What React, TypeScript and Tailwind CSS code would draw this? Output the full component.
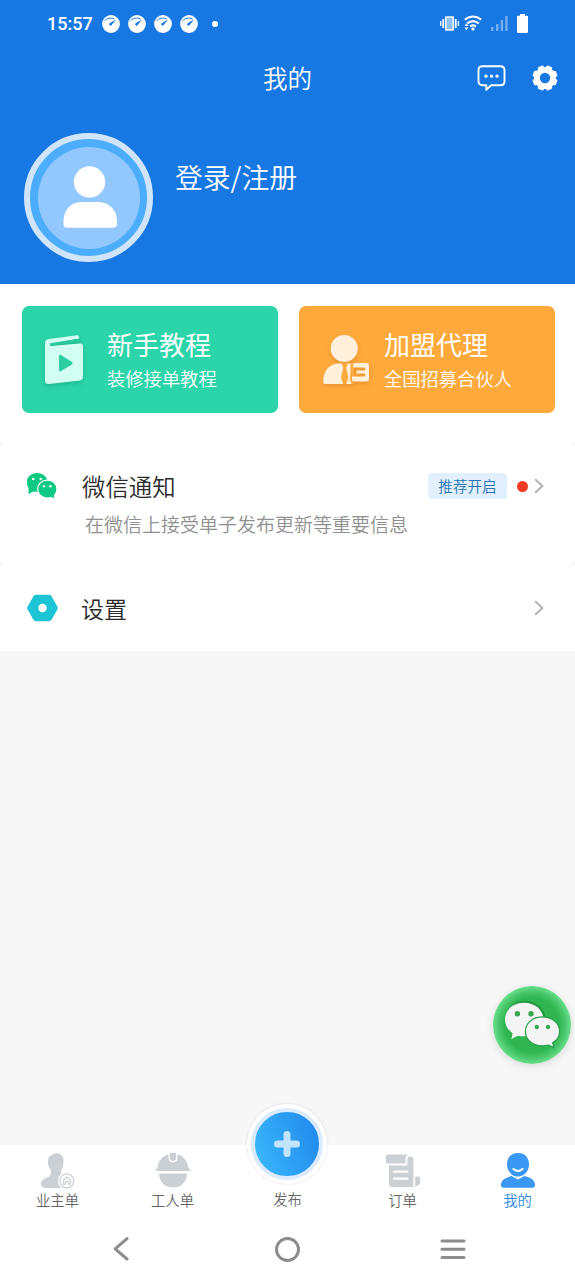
function Gauge() {
    return (
        <svg width="18" height="18" viewBox="0 0 18 18">
            <circle cx="9" cy="9" r="8.9" fill="#fff" />
            <path d="M2.8 5.4 C5.4 3 8.4 2.6 12 3.6" fill="none" stroke="#1878e3" strokeWidth="1" strokeLinecap="round" />
            <path d="M14.2 4.2 L10 9.6 A1.4 1.4 0 1 1 8.1 8 Z" fill="#1878e3" />
        </svg>
    )
}

function StatusBar() {
    return (
        <div className="h-12 flex items-center justify-between pl-[47px] pr-[47px]">
            <div className="flex items-center">
                <p className="w-[55px] text-[18px] leading-6 font-medium font-[Roboto,sans-serif]">15:57</p>
                <div className="flex gap-2">
                    <Gauge />
                    <Gauge />
                    <Gauge />
                    <Gauge />
                </div>
                <span className="w-1.5 h-1.5 ml-[14px] rounded-full bg-white"></span>
            </div>
            <svg width="88" height="20" viewBox="440 14 88 20" fill="#fff">
                <rect x="440" y="21" width="1.5" height="5" opacity=".85" />
                <rect x="442.4" y="19" width="1.8" height="9" />
                <rect x="445.8" y="17" width="7.4" height="13" fill="#8fc0f5" stroke="#fff" strokeWidth="1.4" />
                <rect x="454.8" y="19" width="1.8" height="9" />
                <rect x="457.6" y="21" width="1.5" height="5" opacity=".85" />
                <g fill="none" stroke="#fff" strokeWidth="2.1">
                    <path d="M464.8 19.6 Q473 13.4 481.2 19.6" />
                    <path d="M467.2 23.4 Q473 18.8 478.8 23.4" />
                    <path d="M470.2 26.6 Q473 24.2 475.8 26.6" />
                </g>
                <circle cx="473" cy="29" r="1.6" />
                <path d="M464.6 26 L466.5 23.2 L468.4 26 Z M464.6 27.4 L466.5 30.2 L468.4 27.4 Z" />
                <g fill="#76aff0">
                    <rect x="491" y="27" width="2.4" height="4" />
                    <rect x="496" y="24" width="2.4" height="7" />
                    <rect x="500.7" y="20" width="2.4" height="11" />
                    <rect x="505.2" y="16" width="2.4" height="15" />
                </g>
                <path d="M520 14 H525 V15.8 H527 Q528 15.8 528 16.8 V32 Q528 33 527 33 H518 Q517 33 517 32 V16.8 Q517 15.8 518 15.8 H520 Z" />
            </svg>
        </div>
    )
}

function Header() {
    return (
        <div className="h-[284px] bg-[#1878e3] text-white font-[350]">
            <StatusBar />
            <div className="h-[60px] grid grid-cols-3 items-center">
                <span></span>
                <p className="text-center text-[24.5px] leading-8">我的</p>
                <div className="flex items-center justify-end gap-[26px] pr-[17px]">
                    <svg width="29" height="28" viewBox="0 0 29 28" fill="none" stroke="#fff" strokeWidth="1.9" strokeLinejoin="round">
                        <path d="M5.5 2.2 H23.5 Q27.5 2.2 27.5 6.2 V17.2 Q27.5 21.2 23.5 21.2 H14.2 L9.3 25.8 V21.2 H5.5 Q1.5 21.2 1.5 17.2 V6.2 Q1.5 2.2 5.5 2.2 Z" />
                        <g fill="#fff" stroke="none">
                            <circle cx="9" cy="12.2" r="1.6" />
                            <circle cx="14.5" cy="12.2" r="1.6" />
                            <circle cx="20" cy="12.2" r="1.6" />
                        </g>
                    </svg>
                    <svg width="26" height="26" viewBox="-13 -13 26 26">
                        <g fill="#fff">
                            <circle r="10.9" />
                            <rect x="-3.2" y="-12.6" width="6.4" height="25.2" rx="1.6" transform="rotate(22.5)" />
                            <rect x="-3.2" y="-12.6" width="6.4" height="25.2" rx="1.6" transform="rotate(67.5)" />
                            <rect x="-3.2" y="-12.6" width="6.4" height="25.2" rx="1.6" transform="rotate(112.5)" />
                            <rect x="-3.2" y="-12.6" width="6.4" height="25.2" rx="1.6" transform="rotate(157.5)" />
                        </g>
                        <circle r="5.2" fill="#1878e3" />
                    </svg>
                </div>
            </div>
            <div className="flex pt-[25px] pl-[24px]">
                <div className="w-[129px] h-[129px] rounded-full border-[6px] border-[#d0e5fb] bg-[#4dadfd] flex items-center justify-center">
                    <div className="w-[102px] h-[102px] rounded-full bg-[#93c8ff] flex items-center justify-center">
                        <svg width="56" height="64" viewBox="0 0 56 64" fill="#fff">
                            <circle cx="28.5" cy="16" r="15.7" />
                            <path d="M21 36 H37 C49 36 56 45 56 55 V58 C56 61 54 61.8 50 61.8 H8 C4 61.8 2.5 61 2.5 58 V55 C2.5 45 9 36 21 36 Z" />
                        </svg>
                    </div>
                </div>
                <p className="ml-[22px] mt-[22px] text-[27.8px] leading-[42px]">登录/注册</p>
            </div>
        </div>
    )
}

function Banners() {
    return (
        <div className="h-[158px] bg-white flex gap-[21px] pl-[22px] pt-[22px] text-white">
            <div className="w-[256px] h-[107px] rounded-[7px] bg-[#2bd4a9] flex">
                <svg className="ml-[22px] mt-[28px] drop-shadow-[0_2px_2px_rgba(0,110,80,0.3)]" width="40" height="54" viewBox="0 0 40 54">
                    <path d="M5 5 L33 1.2 Q35 1 35 3 V4.5 L6 9.5 V12 L36 9.5 Q39 9.3 39 12 V43 Q39 46 36 46.4 L5 50 Q1 50.4 1 47 V9 Q1 5.6 5 5 Z" fill="#d2fff2" />
                    <path d="M6 9.5 L35 4.8 V7.8 L6 12 Z" fill="#2bc9a0" />
                    <path d="M15 22 Q15 20 17 21 L28 28 Q29.5 29.2 28 30.4 L17 37 Q15 38 15 36 Z" fill="#2bcda3" />
                </svg>
                <div className="ml-[23px] pt-[20px]">
                    <p className="text-[26px] leading-9">新手教程</p>
                    <p className="mt-px text-[18.3px] leading-[30px] font-[350]">装修接单教程</p>
                </div>
            </div>
            <div className="w-[256px] h-[107px] rounded-[7px] bg-[#fda93c] flex">
                <svg className="ml-[23px] mt-[28px] drop-shadow-[0_2px_2px_rgba(170,80,0,0.25)]" width="50" height="54" viewBox="0 0 50 54" fill="#fff0dc">
                    <circle cx="22.2" cy="14.5" r="13.6" />
                    <path d="M1.2 47.5 Q1 50 3 50 H30 V29.5 H15 C6 31 1.2 38 1.2 47.5 Z" />
                    <path d="M19.5 29.2 H26 L24.2 33.6 L26.4 44 L24.2 50.2 H21.2 L19 44 L21.2 33.6 Z" fill="#fda93c" />
                    <path d="M28.8 28.5 H32 V50.2 H30 L28 47 Z" fill="#fda93c" />
                    <path d="M33 29 H45 Q47 29 47 31 V45 Q47 47.5 44.5 47.5 H32.5 Q30 47.5 30 45 V42.6 H41.6 Q43.4 42.6 43.4 41 Q43.4 39.6 41.6 39.6 H34.6 V36.6 H41.6 Q43.4 36.6 43.4 35 Q43.4 33.6 41.6 33.6 H31 V31 Q31 29 33 29 Z" />
                </svg>
                <div className="ml-[12px] pt-[20px]">
                    <p className="text-[26px] leading-9">加盟代理</p>
                    <p className="mt-px text-[18.3px] leading-[30px] font-[350]">全国招募合伙人</p>
                </div>
            </div>
        </div>
    )
}

function Arrow() {
    return (
        <svg width="10" height="16" viewBox="0 0 10 16" fill="none" stroke="#b4b4b4" strokeWidth="2">
            <path d="M1.2 1.2 L8.4 8 L1.2 14.8" />
        </svg>
    )
}

function MenuList() {
    return (
        <div className="font-[350]">
            <div className="h-[123px] bg-white rounded-[8px] pt-[26px]">
                <div className="h-9 flex items-center pl-[26px] pr-[31px]">
                    <svg width="32" height="28" viewBox="0 0 32 28">
                        <path d="M11 1 C5 1 .8 5 .8 10 C.8 13 1.6 14.6 2.6 16 L2.4 22 L7.4 19.4 C8.6 19.7 9.8 19.8 11 19.8 C17 19.8 21.4 15.4 21.4 10 C21.4 5 17 1 11 1 Z" fill="#0dc982" />
                        <path d="M21.4 8.2 C15.8 8.2 11.6 12 11.6 17 C11.6 22 15.8 26 21.4 26 C22.6 26 23.8 25.8 24.8 25.5 L28.8 27.2 L28.4 23.6 C29.8 22 31 19.6 31 17 C31 12 27 8.2 21.4 8.2 Z" fill="#0dc982" stroke="#fff" strokeWidth="1.2" />
                        <g fill="#fff">
                            <circle cx="7.3" cy="7" r="1.3" />
                            <circle cx="14.8" cy="7" r="1.3" />
                            <circle cx="18" cy="14.2" r="1.2" />
                            <circle cx="24.4" cy="14.2" r="1.2" />
                        </g>
                    </svg>
                    <p className="ml-[24px] text-[23.4px] leading-9 text-[#2b2b2b] grow">微信通知</p>
                    <span className="w-[79px] h-[26px] rounded-[4px] bg-[#e2f0fd] text-[#2474b6] text-[14.6px] leading-[26px] text-center">推荐开启</span>
                    <span className="w-[11px] h-[11px] rounded-full bg-[#f03b22] ml-[10px] mr-[6px]"></span>
                    <Arrow />
                </div>
                <p className="ml-[85px] mt-[6px] text-[19px] leading-7 text-[#909090]">在微信上接受单子发布更新等重要信息</p>
            </div>
            <div className="h-[86px] bg-white flex items-center pl-[26px] pr-[31px]">
                <svg width="33" height="28" viewBox="0 0 33 28">
                    <path d="M10 .8 H23 Q24.6 .8 25.5 2.2 L31.4 12.4 Q32.2 14 31.4 15.6 L25.5 25.8 Q24.6 27.2 23 27.2 H10 Q8.4 27.2 7.5 25.8 L1.6 15.6 Q.8 14 1.6 12.4 L7.5 2.2 Q8.4 .8 10 .8 Z" fill="#1bc5d3" />
                    <circle cx="16.5" cy="14" r="4.2" fill="#fff" />
                </svg>
                <p className="ml-[22px] text-[23px] leading-9 text-[#2b2b2b] grow">设置</p>
                <Arrow />
            </div>
        </div>
    )
}

function WechatButton() {
    return (
        <div className="absolute right-[4px] top-[986px] w-[78px] h-[78px] rounded-full bg-[radial-gradient(closest-side,#2db24e_0%,#2fb652_70%,#4ac86c_86%,#6adf8a_100%)] shadow-[0_2px_8px_rgba(0,0,0,0.12)]">
            <svg width="78" height="78" viewBox="0 0 78 78">
                <path d="M31 15.6 C20 15.6 11.4 23.2 11.4 33 C11.4 39.6 14.6 44.4 19.2 47.5 L18.4 53 L25 49.9 C27 50.4 29 50.6 31 50.6 C42 50.6 51.4 43 51.4 33 C51.4 23.2 42 15.6 31 15.6 Z" fill="#22983f" transform="translate(1 -.5)" />
                <path d="M31 16.8 C20 16.8 12 24 12 33.4 C12 39.4 15 44.2 19.6 47.2 L18.4 53 L25 49.7 C27 50.1 29 50.3 31 50.3 C42 50.3 50.4 43 50.4 33.4 C50.4 24 42 16.8 31 16.8 Z" fill="#f4f4f4" />
                <path d="M49.4 30.8 C39.6 30.8 32.4 37.4 32.4 45.4 C32.4 53.6 39.6 59.8 49.4 59.8 C51.6 59.8 53.4 59.5 55.2 59 L61 61.6 L59.6 56.8 C63.8 54.2 66.6 50.2 66.6 45.4 C66.6 37.4 59.2 30.8 49.4 30.8 Z" fill="#f4f4f4" stroke="#299f47" strokeWidth="1.2" />
                <g fill="#38a853">
                    <circle cx="24.4" cy="27.8" r="2.7" />
                    <circle cx="38" cy="27.8" r="2.7" />
                    <circle cx="43.8" cy="41" r="2.2" />
                    <circle cx="55" cy="41" r="2.2" />
                </g>
            </svg>
        </div>
    )
}

function TabBar() {
    return (
        <div className="h-[75px] bg-white grid grid-cols-5 text-center text-[14.3px] leading-5 font-[350] text-[#666]">
            <div className="flex flex-col items-center pt-[8px]">
                <svg width="36" height="36" viewBox="0 0 36 36" fill="#cbd0d5">
                    <path d="M16 .2 C21 .2 23.6 3.4 23.6 8 C23.6 13 22 16.5 21 17.5 V20 C22 24 29 23.5 33 27 V35 H6 C2 35 .8 32.5 .8 30 C1.4 25.5 10 24.5 11 21 V17.5 C9.4 16 8 13 8 8 C8 3.4 11 1.6 16 .2 Z" />
                    <circle cx="26.8" cy="27.8" r="9" fill="#fff" />
                    <circle cx="26.8" cy="27.8" r="7" fill="none" stroke="#cbd0d5" strokeWidth="1.2" />
                    <path d="M23.4 31.2 V27 L26.8 24 L30.2 27 V31.2 H28.2 V28.5 H25.4 V31.2 Z" fill="none" stroke="#cbd0d5" strokeWidth="1.2" />
                </svg>
                <p className="mt-[1px]">业主单</p>
            </div>
            <div className="flex flex-col items-center pt-[8px]">
                <svg width="36" height="36" viewBox="0 0 36 36" fill="#cbd0d5">
                    <path d="M2.6 15 C3.4 6.4 9.6 .8 18 .8 C26.4 .8 32.6 6.4 33.4 15 L35.4 16.4 V18 H.6 V16.4 Z" />
                    <path d="M14.2 -.6 V4.6 Q14.2 8.6 18 8.6 Q21.8 8.6 21.8 4.6 V-.6" fill="#cbd0d5" stroke="#fff" strokeWidth="1.4" />
                    <path d="M4 20.6 H32 C31.6 28 27.4 34.2 20.5 34.2 H15.5 C8.6 34.2 4.4 28 4 20.6 Z" />
                </svg>
                <p className="mt-[1px]">工人单</p>
            </div>
            <div className="flex flex-col items-center">
                <div className="-mt-[41px] mr-px w-[80px] h-[80px] shrink-0 rounded-full bg-white shadow-[0_0_3px_rgba(0,0,0,0.12)] flex items-center justify-center">
                    <div className="w-[72px] h-[72px] rounded-full border-4 border-[#dbeafd] bg-linear-[70deg,#3cbdfb,#1f83ec] bg-origin-border flex items-center justify-center">
                        <svg width="26" height="26" viewBox="0 0 26 26" stroke="#c4e4fe" strokeWidth="7" strokeLinecap="round">
                            <path d="M13 3.5 V22.5 M3.5 13 H22.5" />
                        </svg>
                    </div>
                </div>
                <p className="mt-[5px]">发布</p>
            </div>
            <div className="flex flex-col items-center pt-[8px]">
                <svg width="36" height="36" viewBox="0 0 36 36" fill="#cbd0d5">
                    <path d="M3 1.5 H23 Q20.5 3.5 20.5 6 V10.5 H3 Q.8 10.5 .8 8 V4 Q.8 1.5 3 1.5 Z" />
                    <path d="M4 12.5 H22.4 V6 Q22.4 3.5 25.4 3.5 Q28.4 3.5 28.4 6 V34 H7.5 Q4 34 4 30.5 Z" />
                    <path d="M30.2 24.5 Q30.2 23.5 31.4 23.5 H34 Q35.2 23.5 35.2 24.5 V29 Q35.2 32.4 30.2 33.4 Z" />
                    <path d="M9 18.6 H22.5 M9 25.6 H22.5" stroke="#fff" strokeWidth="2.2" strokeLinecap="round" />
                </svg>
                <p className="mt-[1px]">订单</p>
            </div>
            <div className="flex flex-col items-center pt-[8px] text-[#2a8ae4]">
                <svg width="36" height="36" viewBox="0 0 36 36" fill="#3a98f3">
                    <path d="M18 0 C25 0 29 4.8 29 11.5 C29 18 24 23.6 18 23.6 C12 23.6 7 18 7 11.5 C7 4.8 11 0 18 0 Z" />
                    <path d="M11.5 23 L18 26.4 L24.5 23 C31 24.5 35 27.5 35 31.5 V32.5 Q35 34.8 32.6 34.8 H3.4 Q1 34.8 1 32.5 V31.5 C1 27.5 5 24.5 11.5 23 Z" />
                    <path d="M13.5 16 Q18 19.8 22.5 16" fill="none" stroke="#fff" strokeWidth="2.2" strokeLinecap="round" />
                </svg>
                <p className="mt-[1px]">我的</p>
            </div>
        </div>
    )
}

function SystemNav() {
    return (
        <div className="h-[60px] bg-white flex items-center justify-between pb-[2px] pl-[112px] pr-[109px] text-[#8c8c8c]">
            <svg width="18" height="24" viewBox="0 0 18 24" fill="none" stroke="currentColor" strokeWidth="3" strokeLinecap="round" strokeLinejoin="round">
                <path d="M15 1.6 L3.2 11.8 L15 22" />
            </svg>
            <span className="w-[25px] h-[25px] ml-[5px] rounded-full border-[3px] border-[#8c8c8c]"></span>
            <svg width="26" height="22" viewBox="0 0 26 22" stroke="currentColor" strokeWidth="3" strokeLinecap="round">
                <path d="M2 3 H24 M2 11.3 H24 M2 19.6 H24" />
            </svg>
        </div>
    )
}

export default function App() {
    return (
        <div className="relative w-full h-[1280px] overflow-hidden bg-[#f7f7f7] flex flex-col font-['Noto_Sans_CJK_SC',sans-serif]">
            <Header />
            <Banners />
            <MenuList />
            <div className="mt-auto">
                <TabBar />
                <SystemNav />
            </div>
            <WechatButton />
        </div>
    )
}
